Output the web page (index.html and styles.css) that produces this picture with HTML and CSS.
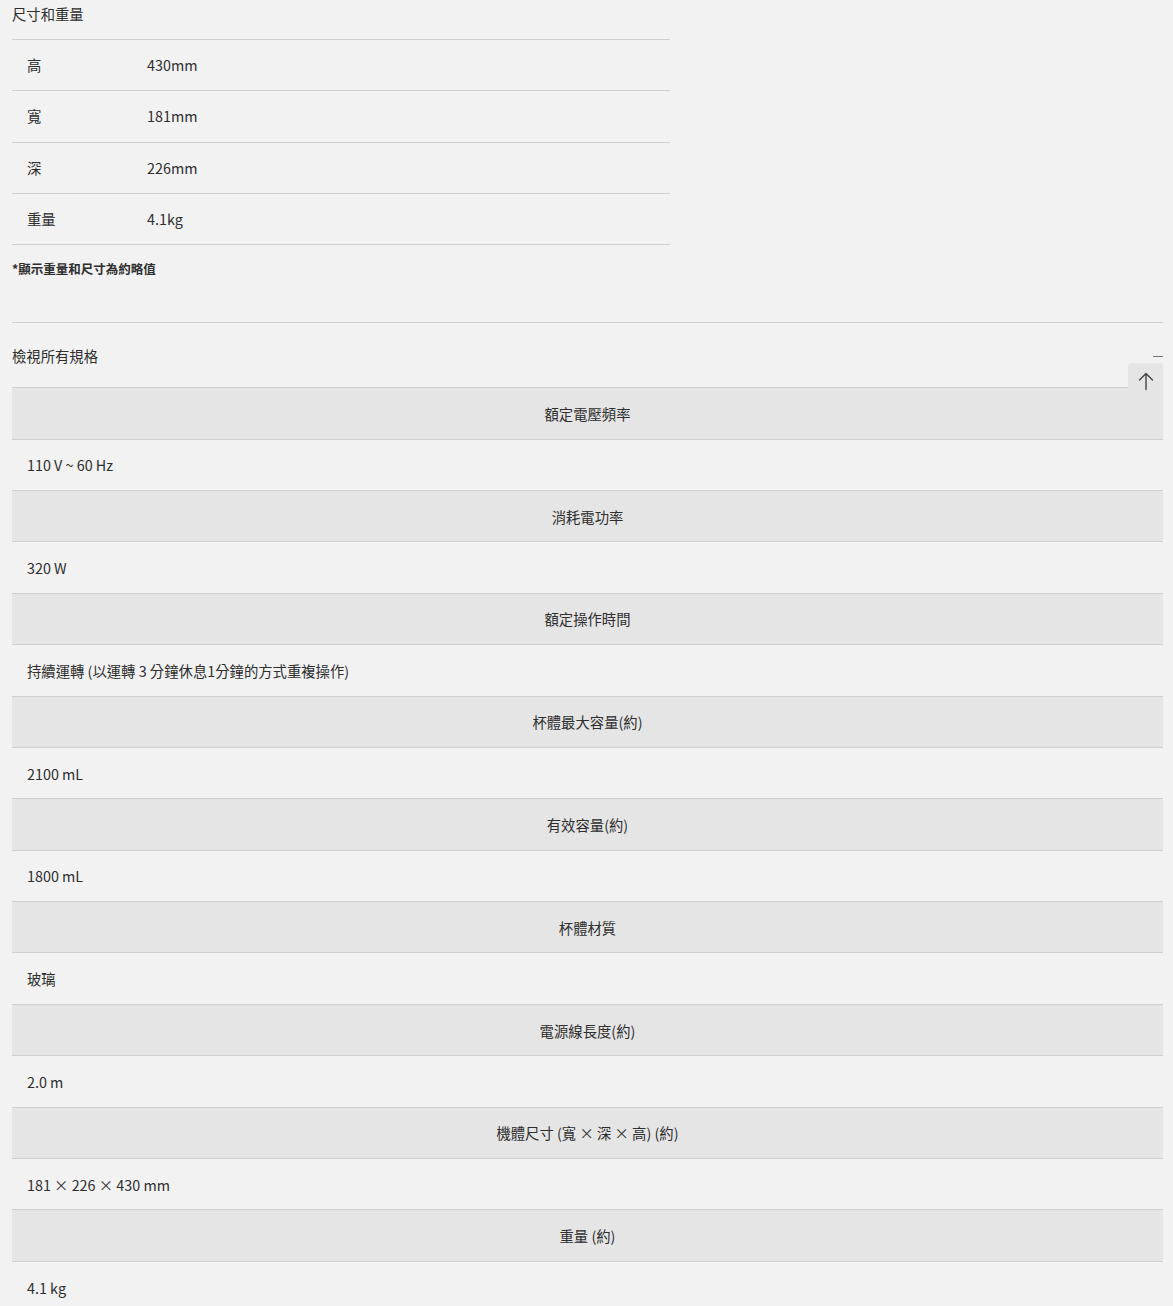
FILE: index.html
```html
<!DOCTYPE html>
<html lang="zh-Hant">
<head>
<meta charset="utf-8">
<link rel="stylesheet" href="styles.css">
</head>
<body>
<div class="page">
  <section class="dims">
    <h2 class="dims-title">尺寸和重量</h2>
    <div class="dims-table">
      <div class="dims-row"><span class="dims-label">高</span><span class="dims-value">430mm</span></div>
      <div class="dims-row"><span class="dims-label">寬</span><span class="dims-value">181mm</span></div>
      <div class="dims-row"><span class="dims-label">深</span><span class="dims-value">226mm</span></div>
      <div class="dims-row"><span class="dims-label">重量</span><span class="dims-value">4.1kg</span></div>
    </div>
    <p class="note">*顯示重量和尺寸為約略值</p>
  </section>

  <section class="specs">
    <div class="specs-head">
      <span class="specs-title">檢視所有規格</span>
      <span class="collapse"></span>
    </div>
    <div class="specs-table">
      <div class="spec-h">額定電壓頻率</div>
      <div class="spec-v">110 V ~ 60 Hz</div>
      <div class="spec-h">消耗電功率</div>
      <div class="spec-v">320 W</div>
      <div class="spec-h">額定操作時間</div>
      <div class="spec-v">持續運轉 (以運轉 3 分鐘休息1分鐘的方式重複操作)</div>
      <div class="spec-h">杯體最大容量(約)</div>
      <div class="spec-v">2100 mL</div>
      <div class="spec-h">有效容量(約)</div>
      <div class="spec-v">1800 mL</div>
      <div class="spec-h">杯體材質</div>
      <div class="spec-v">玻璃</div>
      <div class="spec-h">電源線長度(約)</div>
      <div class="spec-v">2.0 m</div>
      <div class="spec-h">機體尺寸 (寬 × 深 × 高) (約)</div>
      <div class="spec-v">181 × 226 × 430 mm</div>
      <div class="spec-h">重量 (約)</div>
      <div class="spec-v">4.1 kg</div>
    </div>
    <button class="to-top" aria-label="回到頂端">
      <svg width="18" height="20" viewBox="0 0 18 20" fill="none" stroke="#444" stroke-width="1.4" stroke-linecap="round" stroke-linejoin="round"><path d="M9 2.5V18.5M2.5 9L9 2.5L15.5 9"/></svg>
    </button>
  </section>
</div>
</body>
</html>
```

FILE: styles.css
```css
* { box-sizing: border-box; }
html, body { margin: 0; padding: 0; background: #f2f2f2; }
body {
  font-family: "Noto Sans CJK TC", "Noto Sans", sans-serif;
  font-size: 14.35px;
  color: #2e2e2e;
  line-height: 1.4;
}
.page { padding: 0 10px 0 12px; }

.dims { width: 658px; }
.dims-title {
  margin: 0;
  padding-top: 4px;
  font-size: 14.35px;
  font-weight: 400;
  line-height: 20px;
  height: 40px;
  border-bottom: 1px solid #cfcfcf;
}
.dims-row {
  display: flex;
  height: 51.3px;
  align-items: center;
  border-bottom: 1px solid #cfcfcf;
  padding-left: 15px;
}
.dims-label { width: 120px; }
.note {
  margin: 0;
  padding-top: 15px;
  font-size: 12.5px;
  font-weight: 700;
  height: 77px;
}

.specs {
  position: relative;
  border-top: 1px solid #cfcfcf;
}
.specs-head {
  display: flex;
  justify-content: space-between;
  align-items: center;
  height: 64px;
  padding-top: 2px;
}
.collapse {
  width: 10px;
  height: 1px;
  background: #777;
}
.specs-table { border-top: 1px solid #cfcfcf; }
.spec-h, .spec-v {
  height: 51.4px;
  display: flex;
  align-items: center;
  border-bottom: 1px solid #cfcfcf;
  padding-top: 1px;
}
.spec-h {
  background: #e5e5e5;
  justify-content: center;
}
.spec-v { padding-left: 15px; }
.spec-v:last-child { border-bottom: none; }

.to-top {
  position: absolute;
  right: 0;
  top: 40px;
  width: 35px;
  height: 35px;
  border: none;
  border-radius: 3px 3px 0 0;
  background: #e5e5e5;
  padding: 0;
  display: flex;
  align-items: center;
  justify-content: center;
}
```
